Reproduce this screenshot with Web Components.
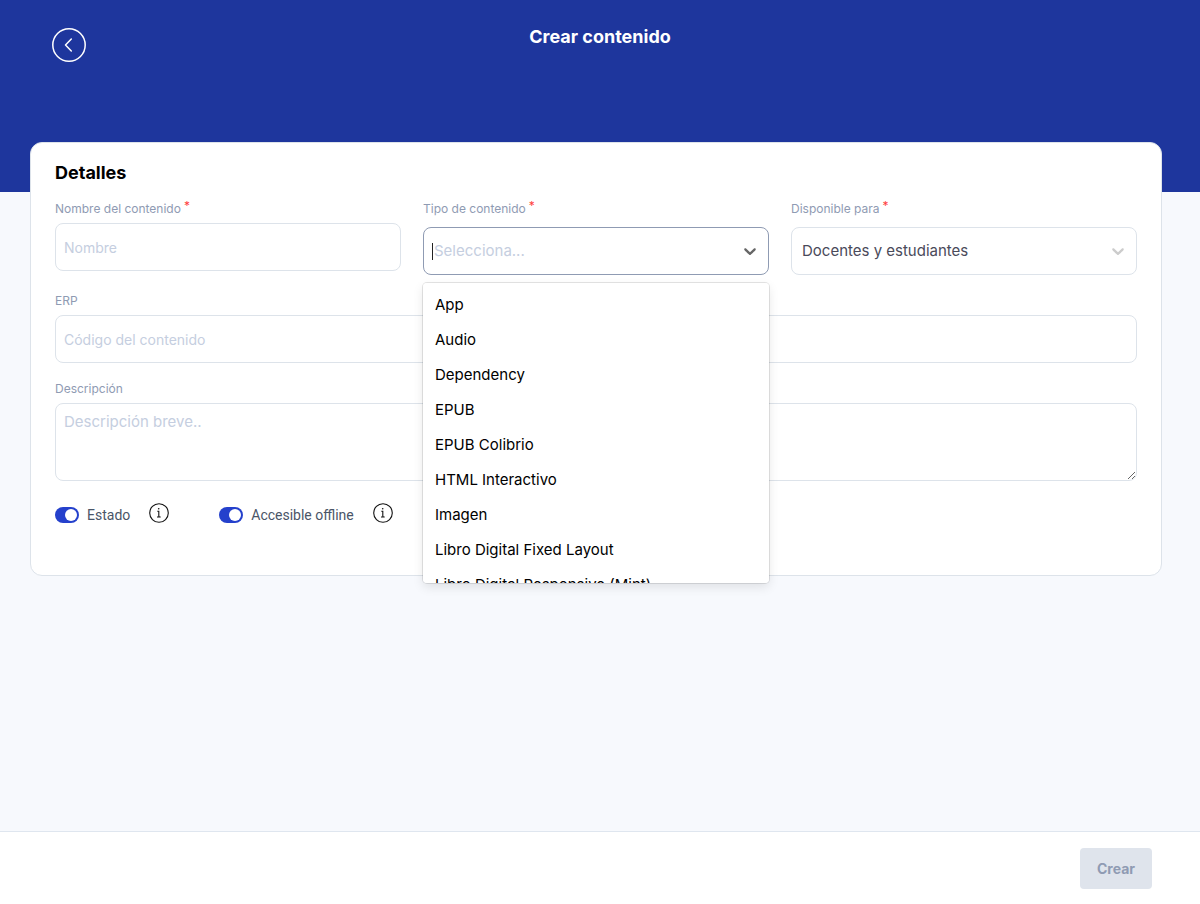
<!DOCTYPE html>
<html lang="es">
<head>
<meta charset="utf-8">
<meta name="viewport" content="width=device-width, initial-scale=1">
<title>Crear contenido</title>
<style>
  html, body { margin: 0; }
  body { font-family: Inter, "Liberation Sans", sans-serif; background: #f7f9fd; color: #000; }
</style>
</head>
<body>
<content-page>
  <page-header slot="header" heading="Crear contenido"></page-header>
  <details-card heading="Detalles">
    <text-field label="Nombre del contenido" placeholder="Nombre" required></text-field>
    <search-select label="Tipo de contenido" placeholder="Selecciona..." required
      options="App|Audio|Dependency|EPUB|EPUB Colibrio|HTML Interactivo|Imagen|Libro Digital Fixed Layout|Libro Digital Responsive (Mint)"></search-select>
    <select-field label="Disponible para" value="Docentes y estudiantes" required></select-field>
    <text-field class="wide" label="ERP" placeholder="Código del contenido"></text-field>
    <text-field class="wide" label="Descripción" placeholder="Descripción breve.." multiline></text-field>
    <toggle-option slot="toggles" label="Estado"></toggle-option>
    <toggle-option slot="toggles" label="Accesible offline"></toggle-option>
  </details-card>
  <action-bar slot="footer">Crear</action-bar>
</content-page>

<script>
const base = `
  *, *::before, *::after { box-sizing: border-box; }
  :host { display: block; min-width: 0; }
  button, input, select, textarea { font: inherit; margin: 0; }
`;

const fieldStyles = `
  .label { display: flex; gap: 3px; height: 16px; font-size: 12px; line-height: 16px; color: #8f9bb3; white-space: nowrap; }
  .star { color: #ff3d3d; line-height: 10px; }
  .box { display: block; width: 100%; border: 1px solid #dde3ea; border-radius: 8px; background: #fff; outline: 0; }
  .box::placeholder, input::placeholder { color: #c5cee0; opacity: 1; }
`;

const chevron = `<svg class="chevron" width="20" height="20" viewBox="0 0 20 20" fill="currentColor" aria-hidden="true"><path d="M4.516 7.548c.436-.446 1.043-.481 1.576 0L10 11.295l3.908-3.747c.533-.481 1.141-.446 1.574 0 .436.445.408 1.197 0 1.615-.406.418-4.695 4.502-4.695 4.502-.217.223-.502.335-.787.335s-.57-.112-.789-.335c0 0-4.287-4.084-4.695-4.502s-.436-1.17 0-1.615z"/></svg>`;

class BaseElement extends HTMLElement {
  connectedCallback() {
    if (!this.shadowRoot) {
      this.attachShadow({ mode: "open" }).innerHTML = `<style>${base}${this.styles()}</style>${this.markup()}`;
    }
  }
  attr(name) { return this.getAttribute(name) || ""; }
  labelFor(id) {
    const star = this.hasAttribute("required") ? `<span class="star">*</span>` : "";
    return `<label class="label" for="${id}">${this.attr("label")}${star}</label>`;
  }
}

customElements.define("content-page", class extends BaseElement {
  styles() { return `
    :host { display: flex; flex-direction: column; min-height: 100vh; }
    main { flex: 1; margin: -50px 38px 24px 30px; }
  `; }
  markup() { return `<slot name="header"></slot><main><slot></slot></main><slot name="footer"></slot>`; }
});

customElements.define("page-header", class extends BaseElement {
  styles() { return `
    header { display: grid; grid-template-columns: 1fr auto 1fr; align-items: start; height: 192px; padding: 24px 52px; background: #1e369d; color: #fff; }
    button { display: grid; width: 34px; height: 34px; margin-top: 4px; padding: 0; border: 0; background: none; color: inherit; }
    h1 { margin: 0; font-size: 18px; line-height: 26px; font-weight: 700; }
  `; }
  markup() { return `
    <header>
      <button type="button" aria-label="Volver">
        <svg width="34" height="34" viewBox="0 0 34 34" fill="none" stroke="currentColor" stroke-width="1.5" stroke-linecap="round" stroke-linejoin="round"><circle cx="17" cy="17" r="16.2"/><path d="M19.3 11 13.5 17l5.8 6"/></svg>
      </button>
      <h1>${this.attr("heading")}</h1>
    </header>`; }
});

customElements.define("details-card", class extends BaseElement {
  styles() { return `
    section { min-height: 434px; padding: 16px 24px 24px; border: 1px solid #dde3ea; border-radius: 12px; background: #fff; }
    h2 { margin: 0 0 14px; font-size: 18px; line-height: 28px; font-weight: 700; }
    .fields { display: grid; grid-template-columns: repeat(3, minmax(0, 1fr)); gap: 18px 22px; }
    ::slotted(.wide) { grid-column: 1 / -1; }
    .toggles { display: flex; gap: 50px; margin-top: 22px; }
  `; }
  markup() { return `
    <section>
      <h2>${this.attr("heading")}</h2>
      <div class="fields"><slot></slot></div>
      <div class="toggles"><slot name="toggles"></slot></div>
    </section>`; }
});

customElements.define("text-field", class extends BaseElement {
  styles() { return fieldStyles + `
    .box { margin-top: 6px; padding: 0 8px; font-size: 14px; line-height: 20px; }
    input.box { height: 48px; }
    textarea.box { height: 78px; padding: 8px; font-size: 15px; resize: vertical; }
  `; }
  markup() {
    const hint = `placeholder="${this.attr("placeholder")}"`;
    return this.labelFor("control") + (this.hasAttribute("multiline")
      ? `<textarea id="control" class="box" ${hint}></textarea>`
      : `<input id="control" class="box" type="text" ${hint}>`);
  }
});

customElements.define("select-field", class extends BaseElement {
  styles() { return fieldStyles + `
    .wrap { display: grid; align-items: center; margin-top: 10px; }
    .box, .chevron { grid-area: 1 / 1; }
    .box { appearance: none; height: 48px; padding: 0 36px 2px 10px; font-size: 15px; color: #4a4a5a; }
    .chevron { justify-self: end; margin-right: 9px; color: #ccc; pointer-events: none; }
  `; }
  markup() { return `${this.labelFor("control")}
    <div class="wrap"><select id="control" class="box"><option>${this.attr("value")}</option></select>${chevron}</div>`; }
});

customElements.define("search-select", class extends BaseElement {
  styles() { return fieldStyles + `
    :host { position: relative; }
    .control { display: flex; align-items: center; height: 48px; margin-top: 10px; padding: 0 8px; border-color: #8f9bb3; }
    .caret { width: 1px; height: 17px; margin-right: 1px; background: #222; }
    input { flex: 1; min-width: 0; padding: 0 0 2px; border: 0; outline: 0; background: none; font-size: 15px; caret-color: transparent; }
    .chevron { color: #666; }
    ul { position: absolute; z-index: 2; top: 100%; left: 0; right: 0; height: 300px; margin: 8px 0 0; padding: 4px 0; overflow-y: auto; scrollbar-width: none; list-style: none; border-radius: 4px; background: #fff; box-shadow: 0 0 0 1px rgba(0,0,0,.1), 0 4px 11px rgba(0,0,0,.1); }
    li { height: 35px; padding: 8px 12px; font-size: 15px; line-height: 19px; white-space: nowrap; }
  `; }
  markup() {
    const items = this.attr("options").split("|").map(o => `<li role="option">${o}</li>`).join("");
    return `${this.labelFor("control")}
      <div class="box control"><span class="caret"></span><input id="control" type="text" role="combobox" aria-expanded="true" aria-controls="menu" placeholder="${this.attr("placeholder")}">${chevron}</div>
      <ul id="menu" role="listbox">${items}</ul>`;
  }
});

customElements.define("toggle-option", class extends BaseElement {
  styles() { return `
    :host { display: flex; align-items: flex-start; gap: 19px; font-family: Roboto, sans-serif; }
    label { display: flex; align-items: center; gap: 8px; margin-top: 2px; height: 20px; font-size: 14px; color: #4a5568; white-space: nowrap; }
    input { appearance: none; display: flex; justify-content: flex-end; align-items: center; width: 24px; height: 16px; padding: 2px; border-radius: 8px; background: #2541cc; }
    input::before { content: ""; width: 12px; height: 12px; border-radius: 50%; background: #fff; }
    input:not(:checked) { justify-content: flex-start; background: #c5cee0; }
    button { display: grid; width: 20px; height: 20px; padding: 0; border: 0; background: none; color: #111; }
  `; }
  markup() { return `
    <label><input type="checkbox" role="switch" checked>${this.attr("label")}</label>
    <button type="button" aria-label="Información">
      <svg width="20" height="20" viewBox="0 0 20 20" fill="none" stroke="currentColor" stroke-width="1.1"><circle cx="10" cy="10" r="9.3"/><path d="M8.3 8.3h1.5v4.7q0 1 1 1h.9M8 14h2"/><circle cx="9.7" cy="5.8" r=".8" fill="currentColor" stroke="none"/></svg>
    </button>`; }
});

customElements.define("action-bar", class extends BaseElement {
  styles() { return `
    footer { display: flex; justify-content: flex-end; padding: 16px 48px 15px; border-top: 1px solid #dfe6ef; background: #fff; }
    button { height: 41px; padding: 0 17px; border: 0; border-radius: 4px; background: #dfe4ec; color: #8f9bb3; font-size: 14px; font-weight: 700; }
  `; }
  markup() { return `<footer><button type="button" disabled><slot></slot></button></footer>`; }
});
</script>
</body>
</html>
